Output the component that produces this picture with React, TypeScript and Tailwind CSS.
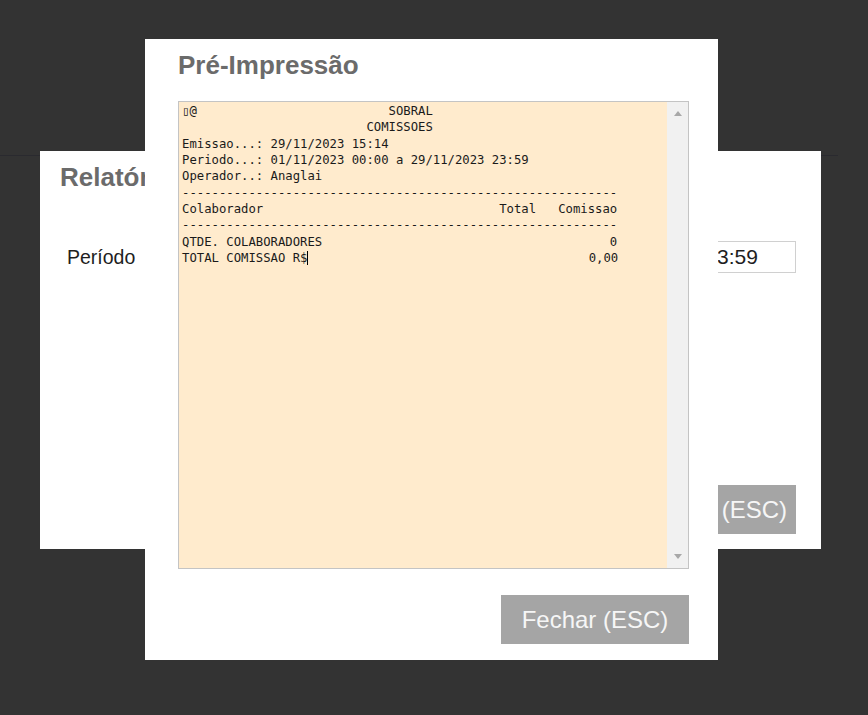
import React from "react";

const linhas = [
  "\u25AF@" + " ".repeat(26) + "SOBRAL",
  " ".repeat(25) + "COMISSOES",
  "Emissao...: 29/11/2023 15:14",
  "Periodo...: 01/11/2023 00:00 a 29/11/2023 23:59",
  "Operador..: Anaglai",
  "-".repeat(59),
  "Colaborador" + " ".repeat(32) + "Total   Comissao",
  "-".repeat(59),
  "QTDE. COLABORADORES" + " ".repeat(39) + "0",
];

function Seta({ down }: { down?: boolean }) {
  return (
    <svg width="8" height="5" viewBox="0 0 8 5" className={down ? "rotate-180" : ""}>
      <polygon points="0,5 4,0 8,5" fill="#a8a8a8" />
    </svg>
  );
}

export default function App() {
  return (
    <div className="relative w-[868px] h-[715px] overflow-hidden bg-[#333333] font-['Liberation_Sans',Arial,sans-serif]">
      {/* pagina de fundo */}
      <div className="h-[156px] w-[838px] border-b border-[#2a2a2f]" />

      {/* modal de relatorio (atras) */}
      <div className="absolute left-[40px] top-[151px] w-[781px] h-[398px] bg-white flex flex-col pl-[20px] pr-[25px]">
        <h2 className="mt-[11px] text-[26px] leading-[30px] font-bold text-[#6b6b6b]">
          Relatório
        </h2>
        <div className="mt-[49px] flex items-center h-[32px]">
          <label className="ml-[7px] text-[19.5px] leading-[24px] text-[#1e1e1e]">Período</label>
          <div className="ml-auto flex gap-2">
            <input
              readOnly
              value="01/11/2023 00:00"
              className="w-[190px] h-[32px] border border-[#d0d0d0] pl-[5px] text-[21px] text-[#1e1e1e] outline-none"
            />
            <input
              readOnly
              value="29/11/2023 23:59"
              className="w-[206px] h-[32px] border border-[#d0d0d0] pl-[5px] text-[21px] text-[#1e1e1e] outline-none"
            />
          </div>
        </div>
        <div className="mt-auto mb-[15px] flex justify-end">
          <button className="h-[49px] pl-[9px] pr-[9px] bg-[#a5a5a5] text-[24px] text-[#f6f6f6]">
            Fechar (ESC)
          </button>
        </div>
      </div>

      {/* modal de pre-impressao */}
      <div className="absolute left-[145px] top-[39px] w-[573px] h-[621px] bg-white flex flex-col pl-[33px] pr-[29px]">
        <h2 className="mt-[11px] text-[26px] leading-[30px] font-bold text-[#6b6b6b]">
          Pré-Impressão
        </h2>
        <div className="mt-[21px] h-[468px] border border-[#c4c4c4] flex">
          <div className="flex-1 bg-[#ffebcd] pl-[3px] pt-[1px] overflow-hidden">
            <pre className="font-['DejaVu_Sans_Mono','Liberation_Mono',monospace] text-[12.25px] leading-[16.35px] text-[#1a1a1a]">
              {linhas.join("\n")}
              {"\nTOTAL COMISSAO R$"}
              <span className="inline-block w-0 h-[14px] border-l border-black align-[-3px]" />
              {" ".repeat(38) + "0,00"}
            </pre>
          </div>
          <div className="w-[21px] bg-[#f1f1f1] flex flex-col items-center justify-between pt-[9px] pb-[9px]">
            <Seta />
            <Seta down />
          </div>
        </div>
        <div className="mt-[26px] flex justify-end">
          <button className="h-[49px] w-[188px] bg-[#a5a5a5] text-[24px] text-[#f6f6f6]">
            Fechar (ESC)
          </button>
        </div>
      </div>
    </div>
  );
}
